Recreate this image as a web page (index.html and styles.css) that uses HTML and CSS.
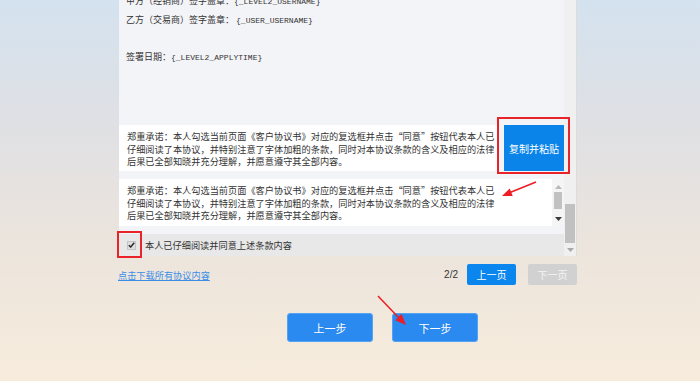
FILE: index.html
```html
<!DOCTYPE html>
<html lang="zh-CN">
<head>
<meta charset="utf-8">
<title>客户协议书</title>
<link rel="stylesheet" href="styles.css">
</head>
<body>
<div class="page">
  <div class="main">
    <div class="panel">
      <div class="panel-body">
        <div class="doc">
          <div class="doc-lines">
            <p class="doc-line">甲方（经销商）签字盖章：<span class="var">{_LEVEL2_USERNAME}</span></p>
            <p class="doc-line">乙方（交易商）签字盖章： <span class="var">{_USER_USERNAME}</span></p>
            <p class="doc-line">&nbsp;</p>
            <p class="doc-line">签署日期：<span class="var">{_LEVEL2_APPLYTIME}</span></p>
          </div>
        </div>
        <div class="promise-row">
          <div class="promise-box">
            <p class="promise-text">郑重承诺：本人勾选当前页面《客户协议书》对应的复选框并点击“同意”按钮代表本人已仔细阅读了本协议，并特别注意了字体加粗的条款，同时对本协议条款的含义及相应的法律后果已全部知晓并充分理解，并愿意遵守其全部内容。</p>
          </div>
          <button class="copy-btn" type="button">复制并粘贴</button>
        </div>
        <div class="memo">
          <div class="memo-box">
            <p class="promise-text">郑重承诺：本人勾选当前页面《客户协议书》对应的复选框并点击“同意”按钮代表本人已仔细阅读了本协议，并特别注意了字体加粗的条款，同时对本协议条款的含义及相应的法律后果已全部知晓并充分理解，并愿意遵守其全部内容。</p>
          </div>
          <div class="mini-scroll">
            <svg class="mini-up" width="7" height="4" viewBox="0 0 7 4"><path d="M0 4 L3.5 0 L7 4 Z" fill="#b9b9b9"/></svg>
            <span class="mini-thumb"></span>
            <svg class="mini-down" width="7" height="4" viewBox="0 0 7 4"><path d="M0 0 L7 0 L3.5 4 Z" fill="#3a3a3a"/></svg>
          </div>
        </div>
        <label class="agree">
          <span class="check"><svg width="7" height="6" viewBox="0 0 7 6"><path d="M0.8 3.2 L2.7 5 L6.2 0.8" fill="none" stroke="#2b2b2b" stroke-width="1.5"/></svg></span>
          <span class="agree-text">本人已仔细阅读并同意上述条款内容</span>
        </label>
      </div>
      <div class="vscroll">
        <span class="v-thumb"></span>
        <svg class="v-down" width="7" height="4" viewBox="0 0 7 4"><path d="M0 0 L7 0 L3.5 4 Z" fill="#a9a9a9"/></svg>
      </div>
    </div>
    <div class="pager">
      <a class="download" href="#">点击下载所有协议内容</a>
      <span class="page-num">2/2</span>
      <button class="page-btn" type="button">上一页</button>
      <button class="page-btn disabled" type="button">下一页</button>
    </div>
    <div class="steps">
      <button class="step-btn" type="button">上一步</button>
      <button class="step-btn" type="button">下一步</button>
    </div>
  </div>
  <svg class="marks" width="700" height="381" viewBox="0 0 700 381">
    <rect x="498" y="118" width="71" height="55" fill="none" stroke="#e8232a" stroke-width="2"/>
    <rect x="118" y="232" width="23" height="25" fill="none" stroke="#e8232a" stroke-width="2"/>
    <line x1="536" y1="182" x2="510" y2="192.5" stroke="#ee1c24" stroke-width="1.5"/>
    <polygon points="502,196 509.7,188.5 512.7,195.9" fill="#ee1c24"/>
    <line x1="378" y1="296" x2="399" y2="318" stroke="#ee1c24" stroke-width="1.5"/>
    <polygon points="406,325 395.2,320.2 401.6,314" fill="#ee1c24"/>
  </svg>
</div>
</body>
</html>
```

FILE: styles.css
```css
* {
  box-sizing: border-box;
}

html, body {
  margin: 0;
  padding: 0;
}

body {
  width: 700px;
  height: 381px;
  overflow: hidden;
  font-family: "Noto Sans CJK SC", "Noto Sans", sans-serif;
  color: #333;
  background: linear-gradient(to bottom, #d4e2ef 0%, #dfe0e4 32%, #ebe4dd 62%, #f7ecdc 100%);
}

.page {
  position: relative;
  width: 700px;
  height: 381px;
}

.main {
  width: 458px;
  margin-left: 119px;
}

.panel {
  display: flex;
  height: 256px;
  border-right: 1px solid #dcdcdc;
}

.panel-body {
  flex: 1;
  display: flex;
  flex-direction: column;
  background: #f3f4f8;
}

.doc {
  height: 117px;
  overflow: hidden;
  padding: 0 7px;
}

.doc-lines {
  margin-top: -8px;
}

.doc-line {
  margin: 0;
  height: 18.5px;
  line-height: 18.5px;
  font-size: 9px;
  color: #333;
  white-space: nowrap;
}

.var {
  font-family: "Liberation Mono", "DejaVu Sans Mono", monospace;
  font-size: 8px;
}

.promise-row {
  display: flex;
  padding-top: 8px;
  height: 54px;
}

.promise-box {
  width: 380px;
  background: #fff;
  padding: 5px 8px;
}

.promise-text {
  margin: 0;
  width: 371px;
  font-size: 9.2px;
  line-height: 12.5px;
  color: #333;
}

.copy-btn {
  width: 60px;
  margin-left: 5px;
  border: 0;
  padding: 0;
  background: #0a84e8;
  color: #fff;
  font-family: inherit;
  font-size: 10px;
}

.memo {
  display: flex;
  margin-top: 8px;
  height: 47px;
}

.memo-box {
  flex: 1;
  background: #fff;
  padding: 5px 8px;
}

.mini-scroll {
  width: 12px;
  background: #f5f5f5;
  display: flex;
  flex-direction: column;
  align-items: center;
  padding-top: 6px;
}

.mini-thumb {
  width: 8px;
  height: 17px;
  margin-top: 3px;
  background: #c1c1c1;
}

.mini-down {
  margin-top: 8px;
}

.agree {
  display: flex;
  align-items: center;
  margin-top: 8px;
  height: 22px;
  background: #e8e8e8;
  padding-left: 8px;
}

.check {
  display: flex;
  align-items: center;
  justify-content: center;
  width: 9px;
  height: 9px;
  background: #dedede;
  border: 1px solid #c4c4c4;
}

.agree-text {
  margin-left: 9px;
  font-size: 9.2px;
  color: #333;
}

.vscroll {
  width: 12px;
  background: #f0f0f0;
  display: flex;
  flex-direction: column;
  justify-content: flex-end;
  align-items: center;
  padding-bottom: 4px;
}

.v-thumb {
  width: 10px;
  height: 39px;
  background: #c1c1c1;
}

.v-down {
  margin-top: 5px;
}

.pager {
  display: flex;
  align-items: center;
  margin-top: 8px;
  height: 21px;
}

.download {
  margin-left: -1px;
  font-size: 9.2px;
  color: #3b8ee6;
  text-decoration: underline;
}

.page-num {
  margin-left: auto;
  margin-right: 9px;
  font-family: "Liberation Sans", sans-serif;
  font-size: 10px;
  color: #333;
}

.page-btn {
  width: 49px;
  height: 21px;
  border: 0;
  border-radius: 2px;
  padding: 0;
  background: #0a86ee;
  color: #fff;
  font-family: inherit;
  font-size: 10px;
}

.page-btn.disabled {
  margin-left: 12px;
  background: #d1d1d1;
  color: #f4f4f4;
}

.steps {
  display: flex;
  gap: 19px;
  margin-top: 28px;
  padding-left: 168px;
}

.step-btn {
  width: 86px;
  height: 29px;
  border: 1px solid #55a2f2;
  border-radius: 3px;
  padding: 0;
  background: #2b8af0;
  color: #fff;
  font-family: inherit;
  font-size: 11px;
}

.marks {
  position: absolute;
  left: 0;
  top: 0;
  pointer-events: none;
}
```
